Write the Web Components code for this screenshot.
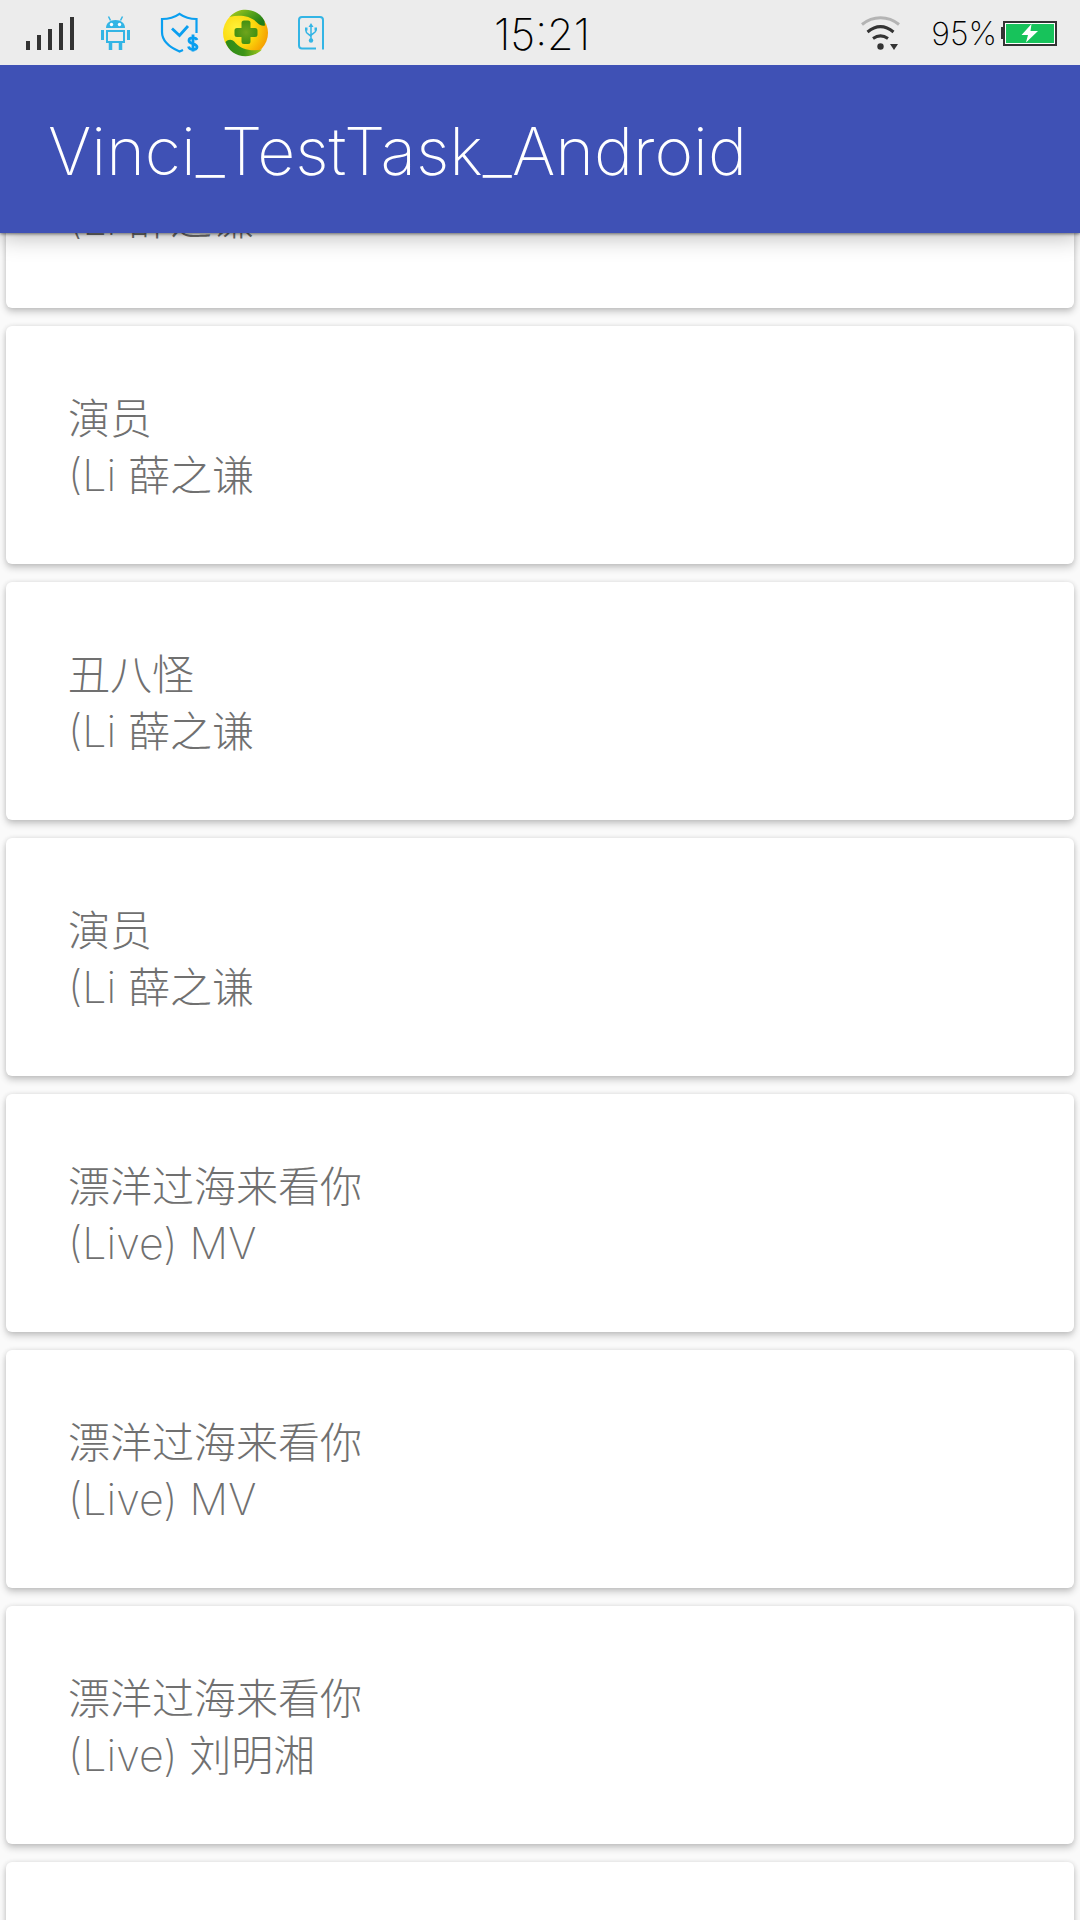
<!DOCTYPE html>
<html lang="zh-CN">
<head>
<meta charset="utf-8">
<meta name="viewport" content="width=device-width, initial-scale=1">
<title>Vinci_TestTask_Android</title>
<style>
  body { margin: 0; background: #fafafa; font-family: Inter, "Noto Sans CJK SC", sans-serif; font-weight: 200; }
  .latin { font-size: 43px; }
</style>
</head>
<body>
<app-screen>
  <status-bar slot="status" time="15:21" battery="95%"></status-bar>
  <app-bar slot="bar">Vinci_TestTask_Android</app-bar>
  <song-card><span slot="artist"><span class="latin">(Li</span> 薛之谦</span></song-card>
  <song-card><span slot="name">演员</span><span slot="artist"><span class="latin">(Li</span> 薛之谦</span></song-card>
  <song-card><span slot="name">丑八怪</span><span slot="artist"><span class="latin">(Li</span> 薛之谦</span></song-card>
  <song-card><span slot="name">演员</span><span slot="artist"><span class="latin">(Li</span> 薛之谦</span></song-card>
  <song-card><span slot="name">漂洋过海来看你</span><span slot="artist"><span class="latin">(Live) MV</span></span></song-card>
  <song-card><span slot="name">漂洋过海来看你</span><span slot="artist"><span class="latin">(Live) MV</span></span></song-card>
  <song-card><span slot="name">漂洋过海来看你</span><span slot="artist"><span class="latin">(Live)</span> 刘明湘</span></song-card>
  <song-card></song-card>
</app-screen>

<script>
class BaseElement extends HTMLElement {
  constructor() {
    super();
    this.attachShadow({ mode: 'open' }).innerHTML = this.constructor.markup;
  }
}

class SongCard extends BaseElement {
  static markup = `
    <style>
      :host { display: block; background: #fff; border-radius: 6px; padding: 64px 62px 60px; color: #707070;
        font-size: 42px; line-height: 57px;
        box-shadow: 0 4px 7px rgba(0,0,0,.2), 0 0 5px rgba(0,0,0,.1); }
      p { margin: 0; height: 57px; }
    </style>
    <p><slot name="name"></slot></p>
    <p><slot name="artist"></slot></p>`;
}

class AppBar extends BaseElement {
  static markup = `
    <style>
      :host { display: flex; align-items: center; box-sizing: border-box; height: 168px; padding: 4px 48px 0; background: #3f51b5; color: #fff;
        box-shadow: 0 1px 3px rgba(0,0,0,.5), 0 4px 22px rgba(0,0,0,.28); }
      h1 { margin: 0; font-size: 66px; line-height: 84px; font-weight: inherit; }
    </style>
    <h1><slot></slot></h1>`;
}

class StatusBar extends BaseElement {
  static markup = `
    <style>
      :host { display: grid; grid-template-columns: 1fr auto 1fr; align-items: center; height: 65px;
        position: relative; z-index: 1;
        padding: 0 22px 0 26px; background: #ececec; color: #000; }
      div { display: flex; align-items: center; }
      svg { display: block; flex: none; }
      .left { gap: 24px; }
      .right { justify-content: flex-end; gap: 4px; }
      .right .wifi { margin-right: 26px; }
      time { font-size: 43px; line-height: 48px; padding-top: 2px; }
      .level { font-size: 32px; line-height: 48px; padding-top: 2px; }
    </style>
    <div class="left">
      <svg width="50" height="36" viewBox="0 0 50 36" fill="#333"><path d="M0 26h4v9H0zM11 20h4v15h-4zM22 14h4v21h-4zM33 8h4v27h-4zM44 2h4v33h-4z"/></svg>
      <svg width="32" height="36" viewBox="0 0 32 36" fill="none" stroke="#33b5e5" stroke-width="2">
        <path d="M8.500 1.500l2 4M22.500 1.500l-2 4" stroke-width="1.500"/>
        <path d="M6 13c0-5 4-8 9.500-8s9.500 3 9.500 8z" fill="#33b5e5" stroke="none"/>
        <circle cx="11.500" cy="9.500" r="1.700" fill="#fff" stroke="none"/><circle cx="19.500" cy="9.500" r="1.700" fill="#fff" stroke="none"/>
        <path d="M7 16h17v11H7z"/>
        <path d="M10.500 27v8M20.500 27v8" stroke-width="3.500"/>
        <path d="M2.500 15v10M28.500 15v10" stroke-width="3"/>
      </svg>
      <svg width="43" height="42" viewBox="0 0 43 42" fill="none" stroke="#0a9ff0" stroke-width="2.200">
        <path d="M40.500 21V7C34 7 28 5 23.500 1.800 19 5 13 7 6 7v13c0 9 7 15 17.500 19.500l3.500-1.500"/>
        <path d="M16 16.500l7.500 7L32 14" stroke-width="2.800"/>
        <path d="M41 28c-1-3-8-3-8 .5 0 4 8 2.500 8 6.500 0 3.500-7.500 3.500-8.500-.5M37 22.500v17" stroke-width="2.800"/>
      </svg>
      <svg width="46" height="48" viewBox="0 0 46 48">
        <defs>
          <radialGradient id="y" cx=".3" cy=".4" r=".75"><stop offset="0" stop-color="#fff23a"/><stop offset=".55" stop-color="#fbd80c"/><stop offset="1" stop-color="#f59a00"/></radialGradient>
          <linearGradient id="g" x1="0" x2="1" y1="0" y2=".6"><stop offset="0" stop-color="#b5cf1c"/><stop offset=".5" stop-color="#5fa81c"/><stop offset="1" stop-color="#1f7d18"/></linearGradient>
          <linearGradient id="h" x1="0" x2="1" y1="0" y2="0"><stop offset="0" stop-color="#2d8a18"/><stop offset=".5" stop-color="#3c9418"/><stop offset="1" stop-color="#a5c81c"/></linearGradient>
          <radialGradient id="p"><stop offset="0" stop-color="#6fa41c"/><stop offset="1" stop-color="#429012"/></radialGradient>
        </defs>
        <circle cx="22.500" cy="24" r="22.500" fill="url(#y)"/>
        <path d="M6.500 8C12 2.500 17 .8 22.500 .8 31 .8 38 5 41.500 12l.5 4.500c-3 .5-5 0-7.500-2.500C28 7 17 5.500 6.500 8z" fill="url(#g)"/>
        <path d="M2.500 33c3-3 7-3 10 1 6 6.500 15 8.500 26.500 6.500C34.500 45 29 47.200 22.500 47.200 13 47.200 5.500 42 2.500 33z" fill="url(#h)"/>
        <path d="M21 11.500h4a2.500 2.500 0 0 1 2.500 2.500v5H32a2.500 2.500 0 0 1 2.500 2.500v4A2.500 2.500 0 0 1 32 28h-4.500v4.500A2.500 2.500 0 0 1 25 35h-4a2.500 2.500 0 0 1-2.500-2.500V28H14a2.500 2.500 0 0 1-2.500-2.500v-4A2.500 2.500 0 0 1 14 19h4.500v-5a2.500 2.500 0 0 1 2.500-2.500z" fill="url(#p)"/>
      </svg>
      <svg width="33" height="36" viewBox="0 0 33 36" fill="none" stroke="#33b5e5" stroke-width="2">
        <path d="M23 33.500H9a3 3 0 0 1-3-3V5a3 3 0 0 1 3-3h18a3 3 0 0 1 3 3v29.500"/>
        <path d="M18 25V10M18 22c0-3-5-2-5-6v-2M18 21c0-3 5-2 5-6v-2" stroke-width="1.500"/>
        <path d="M15.500 12L18 8l2.500 4z" fill="#33b5e5" stroke="none"/><circle cx="18" cy="25.500" r="2.200" fill="#33b5e5" stroke="none"/>
        <path d="M12 12.500h2.500v3H12zM21.500 12.500H24v3h-2.500z" fill="#33b5e5" stroke="none"/>
      </svg>
    </div>
    <time></time>
    <div class="right">
      <svg class="wifi" width="40" height="36" viewBox="0 0 40 36" fill="none" stroke="#333" stroke-width="3">
        <path d="M1 9.500C12 .5 27 .5 38 9.500" stroke="#b4b4b4"/>
        <path d="M6.500 17C15 10 24 10 32.500 17M12 23.500c5-3.500 10-3.500 15 0"/>
        <circle cx="19.500" cy="31.500" r="3.200" fill="#333" stroke="none"/><path d="M29 29h8l-4 6z" fill="#333" stroke="none"/>
      </svg>
      <span class="level"></span>
      <svg width="57" height="26" viewBox="0 0 57 26">
        <path d="M0 7h3v12H0zM2 1h54v25H2z" fill="#333"/><path d="M4 3h50v21H4z" fill="#fff"/><path d="M5 4h48v19H5z" fill="#17c35b"/>
        <path d="M30.500 4l-10 11h6.500l-2 7.500 12-11.500h-7.500z" fill="#fff"/>
      </svg>
    </div>`;
  connectedCallback() {
    this.shadowRoot.querySelector('time').textContent = this.getAttribute('time');
    this.shadowRoot.querySelector('.level').textContent = this.getAttribute('battery');
  }
}

class AppScreen extends BaseElement {
  static markup = `
    <style>
      :host { display: flex; flex-direction: column; height: 100vh; }
      header { position: relative; z-index: 1; flex: none; }
      main { flex: 1; min-height: 0; overflow-y: auto; scrollbar-width: none; }
      .list { display: flex; flex-direction: column; gap: 18px; padding: 9px 6px; }
    </style>
    <header><slot name="status"></slot><slot name="bar"></slot></header>
    <main><div class="list"><slot></slot></div></main>`;
  connectedCallback() {
    // Open the list where the first card is partly under the app bar.
    this.shadowRoot.querySelector('main').scrollTop = 172;
  }
}

customElements.define('song-card', SongCard);
customElements.define('app-bar', AppBar);
customElements.define('status-bar', StatusBar);
customElements.define('app-screen', AppScreen);
</script>
</body>
</html>
